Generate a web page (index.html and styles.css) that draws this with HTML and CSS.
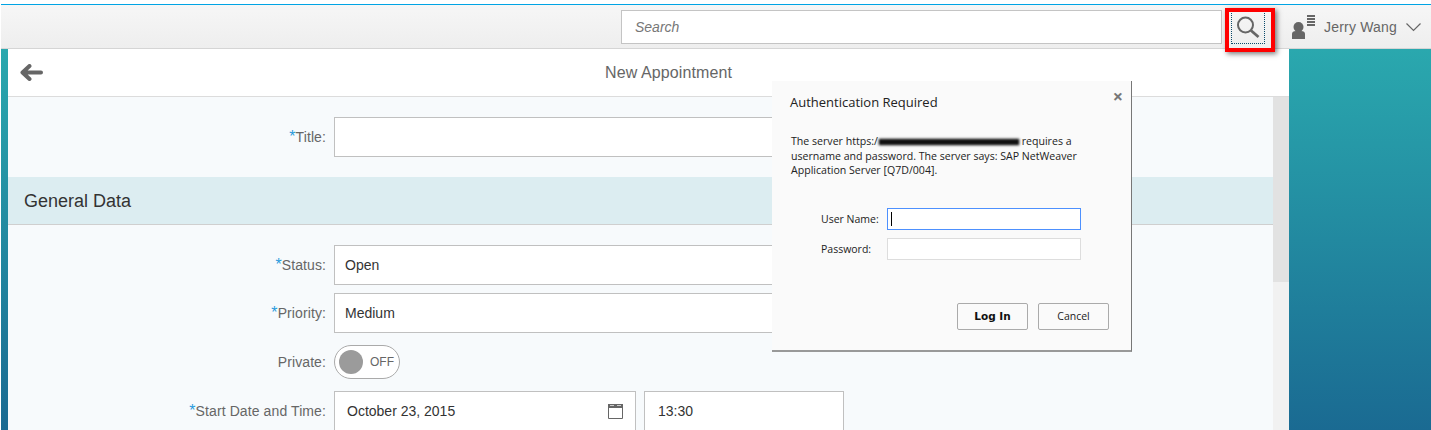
FILE: index.html
```html
<!DOCTYPE html>
<html lang="en">
<head>
    <meta charset="UTF-8">
    <title>New Appointment</title>
    <link rel="stylesheet" href="styles.css">
</head>
<body>
    <div class="shell">
        <!-- Top bar -->
        <div class="topbar">
            <div class="search-box">Search</div>
            <div class="search-btn">
                <svg width="26" height="26" viewBox="0 0 26 26">
                    <circle cx="9.5" cy="10" r="7.5" fill="none" stroke="#666" stroke-width="2"/>
                    <path d="M15 15.5l7.5 6.5" fill="none" stroke="#666" stroke-width="2.8"/>
                </svg>
            </div>
            <div class="user">
                <svg class="user-icon" width="23" height="24" viewBox="0 0 23 24">
                    <circle cx="6.5" cy="12" r="5" fill="#666"/>
                    <path d="M0 24v-5q0-3 4-3h5q4 0 4 3v5z" fill="#666"/>
                    <path d="M15 1h8M15 4h8M15 7h8M15 10h8" stroke="#666" stroke-width="2"/>
                </svg>
                <span class="user-name">Jerry Wang</span>
                <svg width="15" height="9" viewBox="0 0 15 9">
                    <path d="M.5.5l7 7 7-7" fill="none" stroke="#666" stroke-width="1.2"/>
                </svg>
            </div>
        </div>

        <!-- Main -->
        <div class="main">
            <div class="panel">
                <div class="page-header">
                    <svg class="back" width="23" height="17" viewBox="0 0 23 17">
                        <path d="M9.5 2L2.5 8.5l7 6.5M3 8.5h18" fill="none" stroke="#666" stroke-width="4" stroke-linecap="round" stroke-linejoin="round"/>
                    </svg>
                    <div class="page-title">New Appointment</div>
                </div>
                <div class="content">
                    <div class="form-area">
                        <div class="scroll-body">
                            <div class="row title-row">
                                <label><span class="req">*</span>Title:</label>
                                <div class="field"></div>
                            </div>
                            <div class="band">General Data</div>
                            <div class="group">
                                <div class="row">
                                    <label><span class="req">*</span>Status:</label>
                                    <div class="field">Open</div>
                                </div>
                                <div class="row">
                                    <label><span class="req">*</span>Priority:</label>
                                    <div class="field">Medium</div>
                                </div>
                                <div class="row switch-row">
                                    <label>Private:</label>
                                    <div class="switch"><span class="knob"></span><span class="switch-text">OFF</span></div>
                                </div>
                                <div class="row">
                                    <label><span class="req">*</span>Start Date and Time:</label>
                                    <div class="field date">
                                        October 23, 2015
                                        <svg width="15" height="16" viewBox="0 0 15 16">
                                            <path d="M.5 2.5h14v13H.5z" fill="#fff" stroke="#666"/>
                                            <path d="M0 1h15v4H0z" fill="#666"/>
                                            <path d="M2 2.5h4M9 2.5h4" stroke="#ccc"/>
                                        </svg>
                                    </div>
                                    <div class="field time">13:30</div>
                                </div>
                            </div>
                        </div>
                        <div class="scrollbar"><div class="thumb"></div></div>
                    </div>
                </div>
            </div>
            <div class="side"></div>
        </div>
    </div>

    <!-- Login popup -->
    <div class="dialog">
        <div class="close">&#215;</div>
        <div class="dialog-title">Authentication Required</div>
        <div class="dialog-text">
            <div>The server https:/<span class="redacted"></span> requires a</div>
            <div>username and password. The server says: SAP NetWeaver</div>
            <div>Application Server [Q7D/004].</div>
        </div>
        <div class="login-row">
            <label>User Name:</label>
            <div class="login-input active"><span class="caret"></span></div>
        </div>
        <div class="login-row">
            <label>Password:</label>
            <div class="login-input"></div>
        </div>
        <div class="dialog-buttons">
            <button class="login-btn">Log In</button>
            <button>Cancel</button>
        </div>
    </div>

    <!-- Red highlight around the search button -->
    <div class="highlight"></div>
</body>
</html>
```

FILE: styles.css
```css
html, body {
    margin: 0;
    padding: 0;
    height: 430px;
    overflow: hidden;
    background: #fff;
}

body {
    font-family: "Liberation Sans", Arial, sans-serif;
    color: #333;
    position: relative;
}

.shell {
    height: 426px;
    margin-top: 4px;
    margin-left: 1px;
    border-top: 1px solid #00a4e4;
    display: flex;
    flex-direction: column;
    overflow: hidden;
}

/* Top bar */
.topbar {
    flex: none;
    height: 43px;
    background: linear-gradient(#f6f6f6, #eeeeee);
    border-bottom: 1px solid #d5d5d5;
    display: flex;
    align-items: flex-start;
}

.search-box {
    margin: 5px 0 0 620px;
    width: 601px;
    height: 34px;
    box-sizing: border-box;
    border: 1px solid #c4c4c4;
    background: #fff;
    padding-left: 13px;
    line-height: 32px;
    font-size: 14px;
    font-style: italic;
    color: #777;
}

.search-btn {
    margin: 6px 0 0 9px;
    width: 34px;
    height: 33px;
    box-sizing: border-box;
    border: 1px dotted #0a4a6a;
    border-top: 0;
    padding: 4px 0 0 4px;
}

.user {
    margin: 6px 0 0 27px;
    display: flex;
    align-items: center;
    height: 32px;
}

.user-name {
    margin: 0 9px;
    font-size: 14px;
    letter-spacing: 0.2px;
    color: #666;
}

/* Main area */
.main {
    flex: 1;
    display: flex;
    min-height: 0;
    background: linear-gradient(#2aa8ae, #1a6a92);
}

.panel {
    margin-left: 7px;
    width: 1281px;
    background: #fff;
    display: flex;
    flex-direction: column;
}

.side {
    flex: 1;
    background: linear-gradient(#2aa8ae, #1a6a92);
}

.page-header {
    flex: none;
    height: 47px;
    border-bottom: 1px solid #dcdcdc;
    display: flex;
    align-items: center;
}

.back {
    margin-left: 12px;
}

.page-title {
    flex: 1;
    margin-left: -35px;
    padding-left: 40px;
    text-align: center;
    font-size: 16px;
    letter-spacing: 0.1px;
    color: #666;
}

.content {
    flex: 1;
    min-height: 0;
}

.form-area {
    display: flex;
    height: 100%;
}

.scroll-body {
    flex: 1;
    background: #f7fafc;
}

.scrollbar {
    width: 16px;
    background: #f1f1f1;
}

.thumb {
    height: 185px;
    background: #e2e2e2;
}

/* Form rows */
.row {
    display: flex;
    align-items: center;
    margin-bottom: 8px;
}

.row label {
    width: 318px;
    margin-right: 8px;
    text-align: right;
    font-size: 14px;
    letter-spacing: 0.1px;
    color: #666;
}

.req {
    color: #2a9bdc;
    font-size: 16px;
}

.title-row {
    padding-top: 20px;
    margin-bottom: 20px;
}

.field {
    width: 510px;
    height: 40px;
    box-sizing: border-box;
    border: 1px solid #c0c0c0;
    background: #fff;
    padding: 0 10px;
    line-height: 38px;
    font-size: 14px;
    color: #333;
}

.date {
    width: 302px;
    padding: 0 12px;
    margin-right: 8px;
    display: flex;
    justify-content: space-between;
    align-items: center;
}

.time {
    width: 200px;
    padding: 0 13px;
}

.band {
    height: 47px;
    line-height: 49px;
    padding-left: 16px;
    background: #dcedf1;
    border-bottom: 1px solid #cfcfcf;
    font-size: 18px;
    color: #333;
}

.group {
    padding-top: 20px;
}

.switch-row {
    margin-top: 12px;
    margin-bottom: 12px;
}

.switch {
    width: 66px;
    height: 34px;
    box-sizing: border-box;
    border: 1px solid #aaa;
    border-radius: 17px;
    background: #fff;
    display: flex;
    align-items: center;
    padding-left: 4px;
}

.knob {
    width: 24px;
    height: 24px;
    border-radius: 50%;
    background: #9b9b9b;
}

.switch-text {
    margin-left: 7px;
    font-size: 12px;
    color: #666;
}

/* Login popup */
.dialog {
    position: absolute;
    left: 772px;
    top: 81px;
    width: 360px;
    height: 271px;
    box-sizing: border-box;
    padding: 12px 18px 0;
    background: #fafafa;
    border-right: 1px solid #777;
    border-bottom: 2px solid #999;
    font-family: "Open Sans", "Noto Sans", sans-serif;
    color: #222;
}

.close {
    position: absolute;
    right: 8px;
    top: 3px;
    font-size: 18px;
    font-weight: bold;
    color: #777;
}

.dialog-title {
    font-size: 13px;
    line-height: 18px;
}

.dialog-text {
    margin: 23px 0 0;
    padding-left: 1px;
    font-size: 10.6px;
    line-height: 14.5px;
    white-space: nowrap;
}

.redacted {
    display: inline-block;
    width: 140px;
    height: 6px;
    margin-left: 1px;
    vertical-align: 0;
    background: #111;
    box-shadow: 0 0 2px #333;
    filter: blur(0.8px);
}

.login-row {
    display: flex;
    align-items: center;
    margin-top: 8px;
}

.dialog-text + .login-row {
    margin-top: 30px;
}

.login-row label {
    width: 97px;
    padding-left: 31px;
    box-sizing: border-box;
    font-size: 10.5px;
}

.login-input {
    width: 194px;
    height: 22px;
    box-sizing: border-box;
    border: 1px solid #ddd;
    background: #fff;
    padding: 3px;
}

.login-input.active {
    border-color: #4d90fe;
}

.caret {
    display: block;
    width: 1px;
    height: 14px;
    background: #000;
}

.dialog-buttons {
    margin-top: 43px;
    display: flex;
    justify-content: flex-end;
    gap: 10px;
    padding-right: 4px;
}

.dialog-buttons button {
    width: 71px;
    height: 27px;
    padding: 0;
    border: 1px solid #aaa;
    border-radius: 2px;
    background: #fafafa;
    font-family: "Open Sans", "Noto Sans", sans-serif;
    font-size: 10.5px;
    color: #222;
}

.dialog-buttons .login-btn {
    font-family: "DejaVu Sans", sans-serif;
    font-weight: bold;
    color: #111;
}

/* Red highlight */
.highlight {
    position: absolute;
    left: 1225px;
    top: 8px;
    width: 50px;
    height: 44px;
    box-sizing: border-box;
    border: 4px solid #f00;
    box-shadow: 2px 2px 5px rgba(0, 0, 0, 0.5);
}
```
